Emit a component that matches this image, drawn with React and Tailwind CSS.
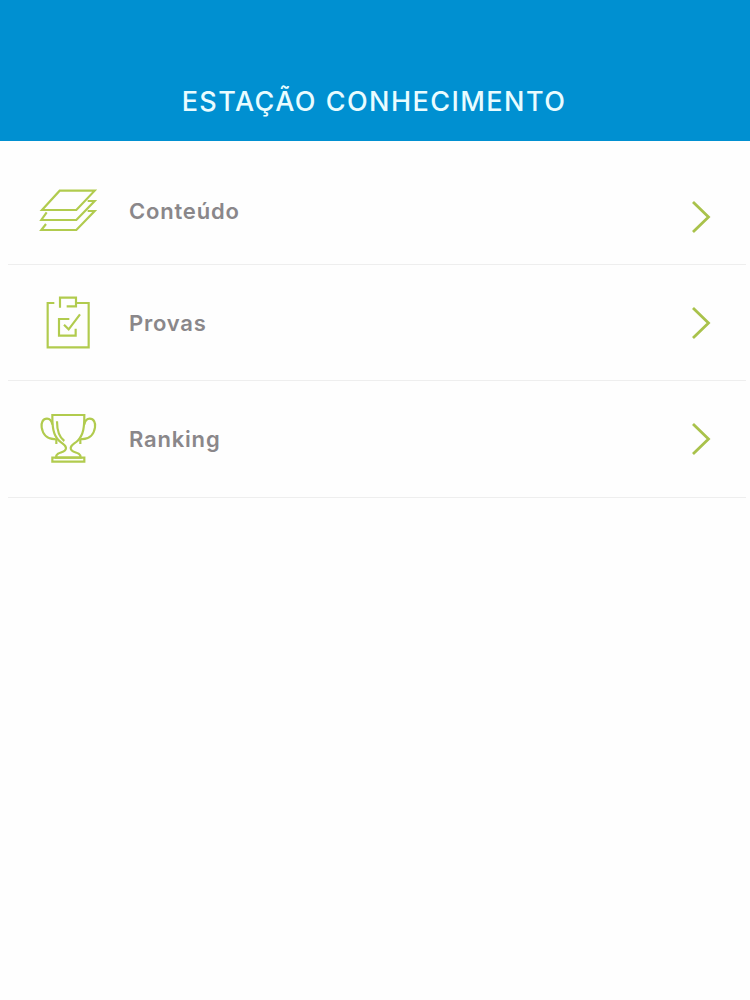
import React from 'react';

const LayersIcon = () => (
  <svg width="80" height="60" viewBox="0 0 240 180" fill="none" stroke="#b1cb4e" strokeWidth="6.5">
    <path d="M36 90 L89 32 H194 L139 90 Z" />
    <path d="M50 97 L34 120 H139 L194 63 H173" />
    <path d="M48 132 L34 150 H139 L194 93 H173" />
  </svg>
);

const ClipboardIcon = () => (
  <svg width="80" height="75" viewBox="0 0 240 225" fill="none" stroke="#b1cb4e" strokeWidth="6.5">
    <path d="M73 54 H53 V187 H176 V54 H139" />
    <path d="M90 68 V38 H138 V64 H110" />
    <path d="M118 102 H87 V152 H137 V131" />
    <path d="M102 119 L116 133 L150 88" />
  </svg>
);

const TrophyIcon = () => (
  <svg width="80" height="65" viewBox="0 0 240 195" fill="none" stroke="#b1cb4e" strokeWidth="6.5">
    <path d="M67 30 H163 C163 65 161 90 143 107 C132 117 122 119 122 129 C122 141 136 141 146 146 Q152 150 152 158 H78 Q78 150 84 146 C94 141 108 141 108 129 C108 119 98 117 87 107 C69 90 67 65 67 30 Z" />
    <path d="M67 59 C65 48 60 41 51 41 C38 41 33 54 35 67 C38 87 51 104 77 102 M79 101 V117" />
    <path d="M163 59 C165 48 170 41 179 41 C192 41 197 54 195 67 C192 87 179 104 153 102 M151 101 V117" />
    <path d="M81 49 C81 78 86 96 103 108" />
    <path d="M67 158 H163 V170 H67 Z" />
  </svg>
);

const Chevron = ({ className = '' }) => (
  <svg
    className={`ml-auto mr-[34px] ${className}`}
    width="22"
    height="34"
    viewBox="0 0 22 34"
    fill="none"
    stroke="#a9c24b"
    strokeWidth="2.8"
  >
    <path d="M3 2 L18.5 17 L3 32" />
  </svg>
);

const App = () => {
  return (
    <div className="min-h-screen bg-[#fefefe] font-['Inter',sans-serif]">
      {/* Header */}
      <header className="flex h-[141px] items-end justify-center bg-[#0090d1] pr-[2px] pb-[22px]">
        <h1 className="whitespace-nowrap text-[27px] leading-[34px] font-medium tracking-[1.45px] text-[#e9fcff]">
          ESTAÇÃO CONHECIMENTO
        </h1>
      </header>

      {/* Menu */}
      <nav className="ml-2 mr-1 text-[22px] font-semibold tracking-[0.8px] text-[#8a878a]">
        <a href="#" className="flex h-[124px] items-center border-b border-[#eeeeee] pt-[15px] pl-[22px]">
          <LayersIcon />
          <span className="ml-[19px] pt-[2px]">Conteúdo</span>
          <Chevron className="mt-[13px]" />
        </a>
        <a href="#" className="flex h-[116px] items-center border-b border-[#eeeeee] pl-[22px]">
          <ClipboardIcon />
          <span className="ml-[19px] pt-[2px]">Provas</span>
          <Chevron />
        </a>
        <a href="#" className="flex h-[117px] items-center border-b border-[#eeeeee] pb-[3px] pl-[22px]">
          <TrophyIcon />
          <span className="ml-[19px] pt-[3px]">Ranking</span>
          <Chevron className="mt-[2px]" />
        </a>
      </nav>
    </div>
  );
};

export default App;
